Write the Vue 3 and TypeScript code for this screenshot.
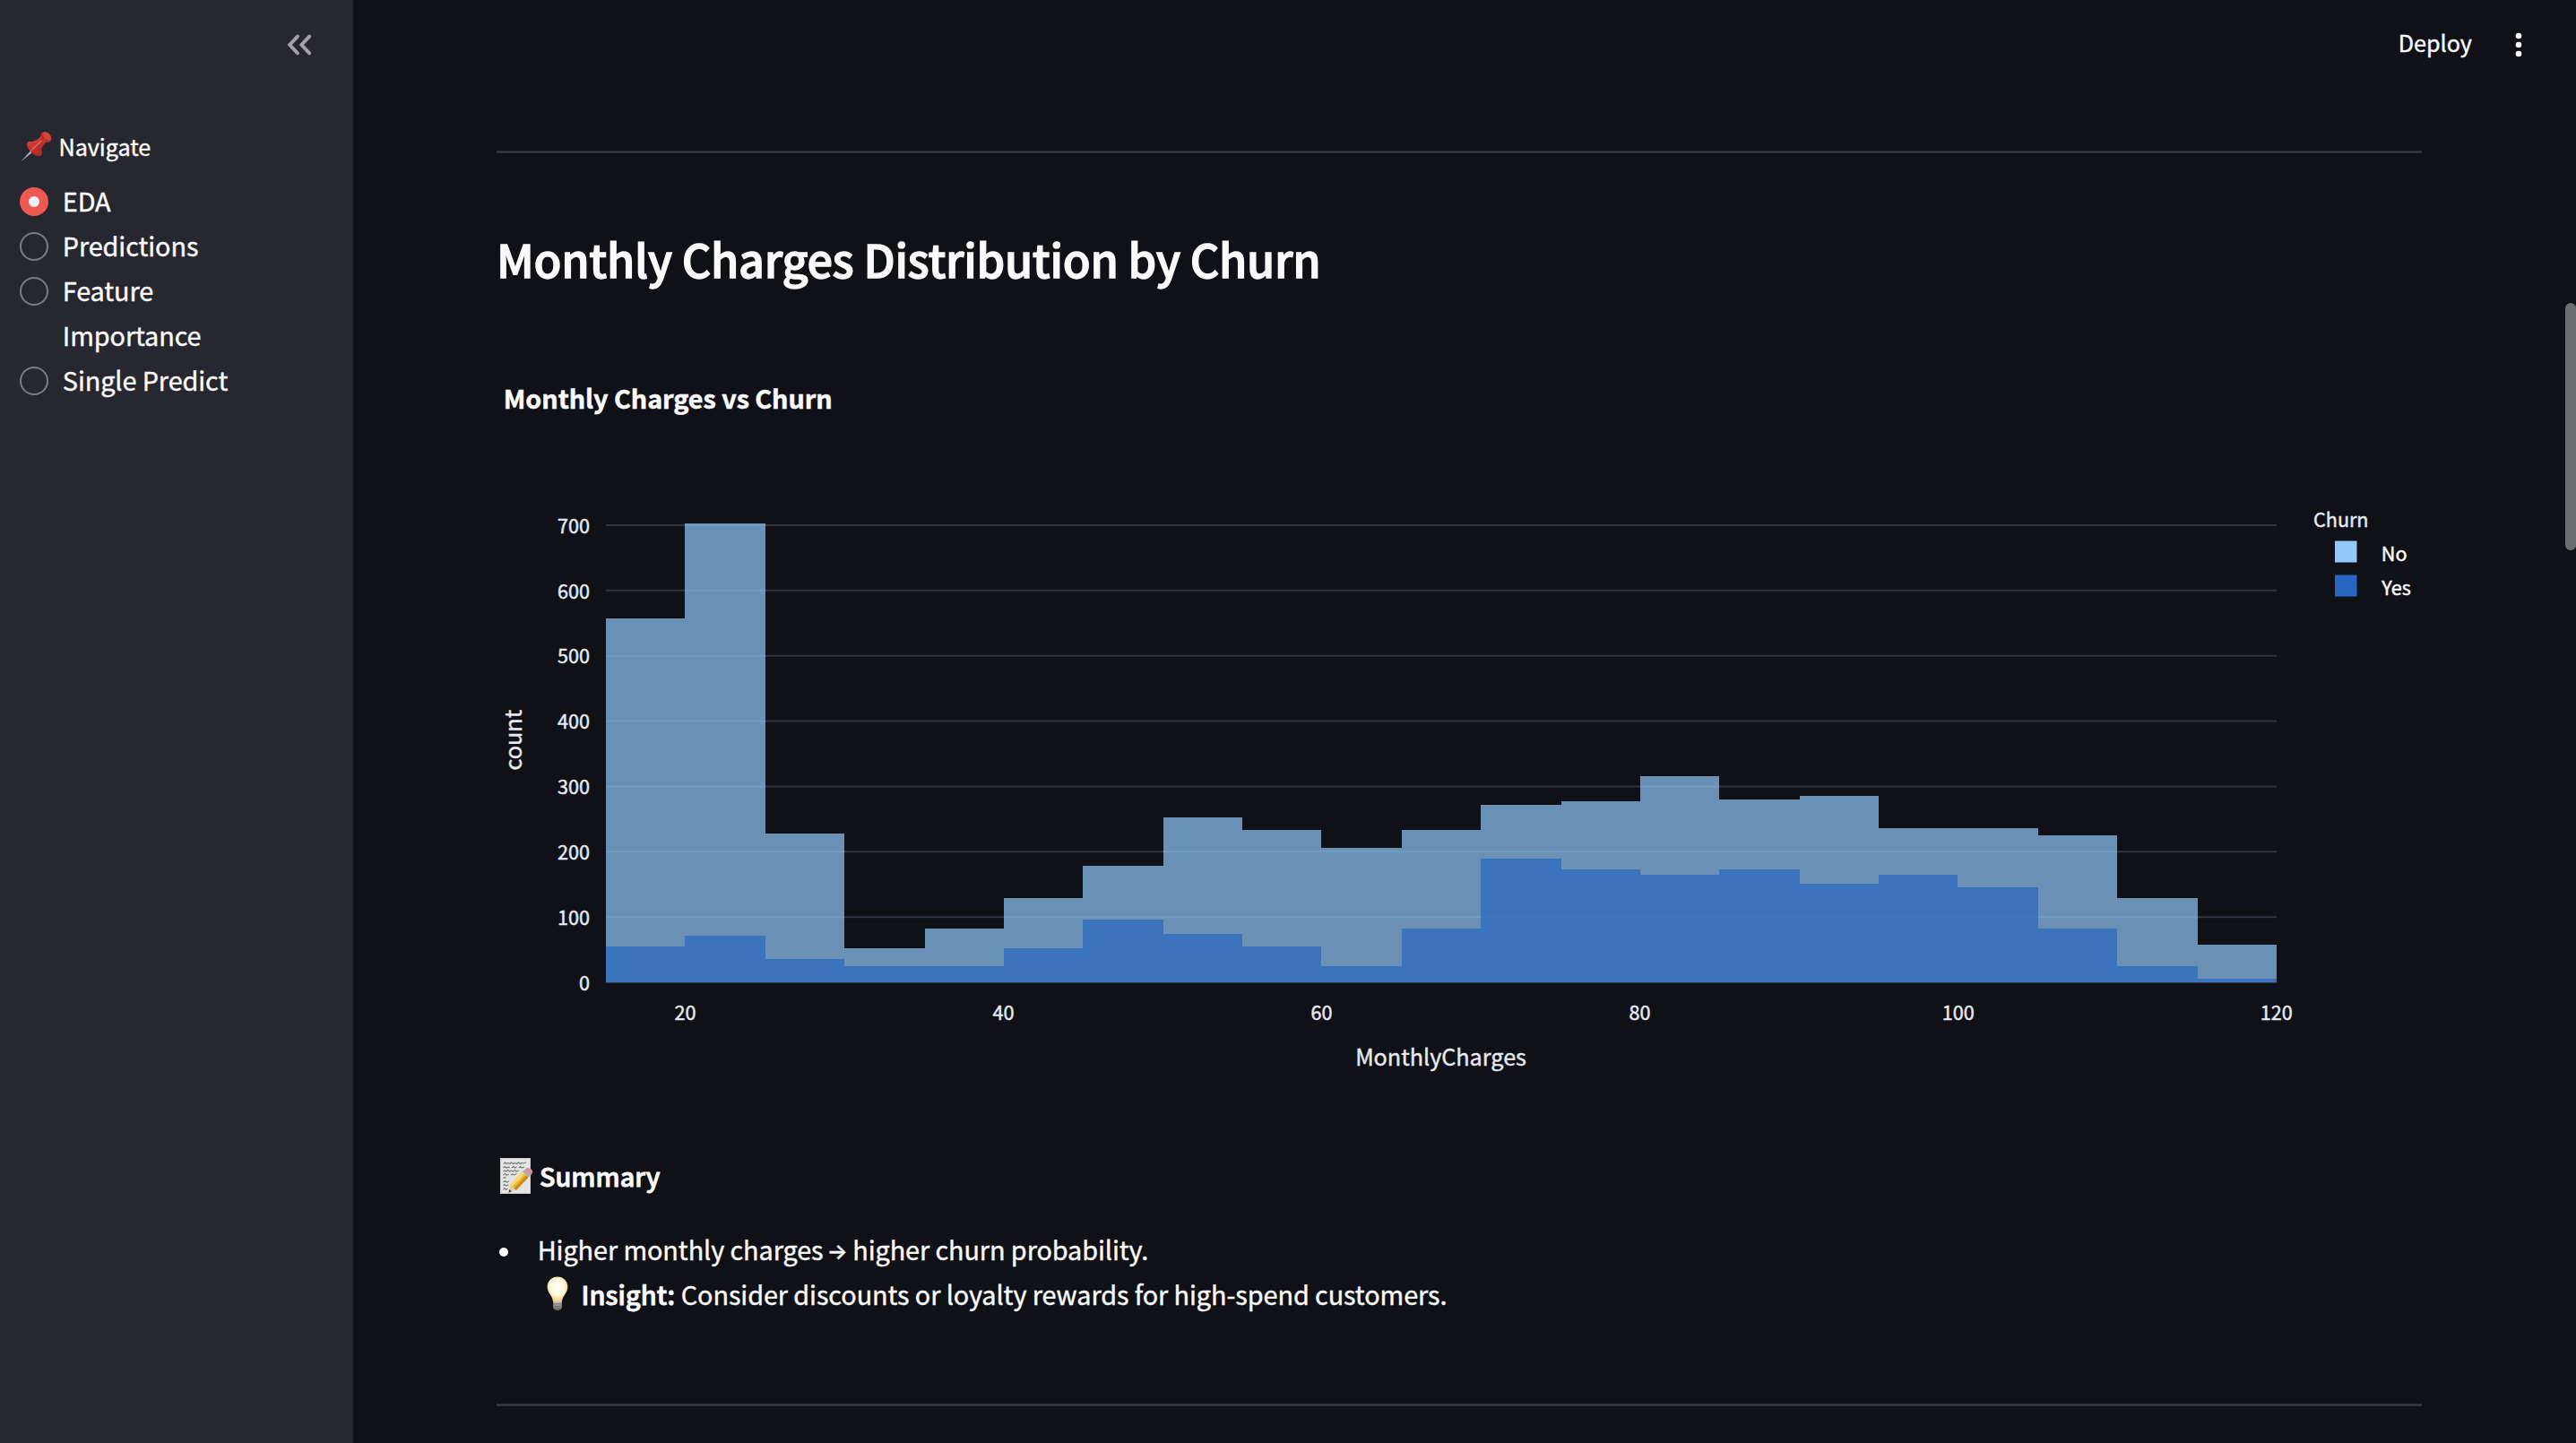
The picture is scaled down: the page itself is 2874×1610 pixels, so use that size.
<script setup lang="ts">
interface NavItem {
  label: string
  active: boolean
}

const navItems: NavItem[] = [
  { label: 'EDA', active: true },
  { label: 'Predictions', active: false },
  { label: 'Feature Importance', active: false },
  { label: 'Single Predict', active: false },
]

// Plot frame, in SVG user units
const plot = { left: 676, right: 2540, base: 1096, unit: 510 / 700 }
const binStart = 15
const binSize = 5

const noTops = [690, 584, 930, 1058, 1036, 1002, 966, 912, 926, 946, 926, 898, 894, 866, 892, 888, 924, 924, 932, 1002, 1054]
const yesTops = [1056, 1044, 1070, 1078, 1078, 1058, 1026, 1042, 1056, 1078, 1036, 958, 970, 976, 970, 986, 976, 990, 1036, 1078, 1092]

const binWidth = (plot.right - plot.left) / noTops.length
const edge = (i: number): number => 2 * Math.round((plot.left + i * binWidth) / 2)

// Outline of one histogram as a single stepped area
function area(tops: number[]): string {
  const steps = tops.map((top, i) => `L${edge(i)} ${top}H${edge(i + 1)}`).join('')
  return `M${plot.left} ${plot.base}${steps}V${plot.base}Z`
}

const noArea = area(noTops)
const yesArea = area(yesTops)

const yTicks = [0, 100, 200, 300, 400, 500, 600, 700].map((value) => ({
  value,
  y: plot.base - value * plot.unit,
}))
const xTicks = [20, 40, 60, 80, 100, 120].map((value) => ({
  value,
  x: plot.left + ((value - binStart) / binSize) * binWidth,
}))
</script>

<template>
  <div class="page">
    <aside class="sidebar">
      <div class="sidebar-head">
        <svg class="collapse" width="30" height="26" viewBox="0 0 30 26">
          <path d="M13 3.6 4.2 13l8.8 9.4M26.2 3.6 17.4 13l8.8 9.4" />
        </svg>
      </div>
      <div class="nav-title">
        <svg width="36" height="36" viewBox="0 0 36 36">
          <defs>
            <linearGradient id="pinRed" x1="0" y1="0" x2="1" y2="1">
              <stop offset="0" stop-color="#d94c43" />
              <stop offset="0.5" stop-color="#c6332d" />
              <stop offset="1" stop-color="#98221e" />
            </linearGradient>
          </defs>
          <path d="M1.2 34.6 14.5 19.6l2.4 2.2Z" fill="#9fb4c6" />
          <ellipse cx="16.4" cy="20" rx="10.6" ry="5.4" transform="rotate(44 16.4 20)" fill="url(#pinRed)" />
          <path d="M10.5 12.2C16 12.6 20.5 9.5 24.6 4.5L31.5 11C26.5 15 23.5 19.5 23.8 25.5Z" fill="url(#pinRed)" />
          <path d="M12 22.8 24 11" stroke="#e58a86" stroke-width="1.3" opacity="0.7" />
          <ellipse cx="29.6" cy="6.8" rx="6.8" ry="4.8" transform="rotate(44 29.6 6.8)" fill="#b92f29" />
          <ellipse cx="30.5" cy="5.8" rx="5.4" ry="3.3" transform="rotate(44 30.5 5.8)" fill="#d6433a" />
        </svg>
        <span>Navigate</span>
      </div>
      <ul class="nav">
        <li v-for="item in navItems" :key="item.label" class="nav-item">
          <span class="radio" :class="{ on: item.active }"></span>
          <span class="nav-label">{{ item.label }}</span>
        </li>
      </ul>
    </aside>

    <main class="main">
      <header class="topbar">
        <span>Deploy</span>
        <svg class="menu" width="40" height="40" viewBox="0 0 24 24">
          <circle cx="12" cy="6" r="2" />
          <circle cx="12" cy="12" r="2" />
          <circle cx="12" cy="18" r="2" />
        </svg>
      </header>

      <div class="content">
        <div class="rule"></div>
        <h3 class="title">Monthly Charges Distribution by Churn</h3>

        <svg class="chart" width="2148" height="840" viewBox="554 400 2148 840">
          <text class="chart-title" x="561.8" y="456">Monthly Charges vs Churn</text>
          <line v-for="t in yTicks" :key="t.value" class="grid" x1="676" x2="2540" :y1="t.y" :y2="t.y" />
          <path class="area-no" :d="noArea" />
          <path class="area-yes" :d="yesArea" />
          <text v-for="t in yTicks" :key="t.value" class="tick" x="658" :y="t.y + 8.7" text-anchor="end">{{ t.value }}</text>
          <text v-for="t in xTicks" :key="t.value" class="tick" :x="t.x - 0.3" y="1137.5" text-anchor="middle">{{ t.value }}</text>
          <text class="axis" x="1607.5" y="1188.7" text-anchor="middle">MonthlyCharges</text>
          <text class="axis" transform="translate(582.3 825.7) rotate(-90)" text-anchor="middle">count</text>
          <text class="tick" x="2581" y="588">Churn</text>
          <rect class="key-no" x="2605" y="603.5" width="24.5" height="24" />
          <rect class="key-yes" x="2605" y="641.5" width="24.5" height="24" />
          <text class="tick key-label" x="2656.8" y="626">No</text>
          <text class="tick key-label" x="2657.3" y="664">Yes</text>
        </svg>

        <div class="summary">
          <svg width="38" height="42" viewBox="0 0 38 42">
            <rect x="1" y="1" width="34" height="40" fill="#e4e4e2" />
            <rect x="1.5" y="1.5" width="33" height="39" fill="none" stroke="#cfcfcd" />
            <g fill="none" stroke="#77787a" stroke-width="1.1">
              <path d="M5 7.5l1.5-1.5 1.5 1.5 2-1 2 1 1.5-1.5 2 1.5 2-1 2 1 2-1.5 1.5 1.5 2-1 2 .5 3-1" />
              <path d="M4.5 12l1.5-1.5 2 1.5 2-1 1.5 1M14 12l2-1.5 1.5 1.5 2-1M22 12l1.5-1.5 1.5 1.5 3-1" />
              <path d="M4.5 16l1.5-1 1.5 1 2-1.5 2 1.5 2-1 2 1 2-1.5 1.5 1.5 3-1" />
              <path d="M4.5 20l2-1.5 1.5 1.5 3-1M13 20l1.5-1 2 1 3-1.5" />
              <path d="M4.5 23.5l1.5-1 1.5 1" />
              <path d="M4.5 28l2-1.5 1.5 1.5 3-1" />
              <path d="M4.5 32l1.5-1.5 1.5 1.5 3-1" />
              <path d="M4.5 36.5l1.5-2 1.5 2 2-1.5" />
            </g>
            <path d="M10.5 39.5 12.8 30.8 18.5 36.3Z" fill="#ead0a0" />
            <path d="M10.5 39.5 11.4 36 13.8 38.4Z" fill="#3a3835" />
            <path d="M12.2 30.4 26 16.300 32.500 22.700 18.800 36.900Z" fill="#f0b93a" />
            <path d="M12.2 30.4 26 16.300 28.300 18.600 14.700 32.600Z" fill="#f9da73" />
            <path d="M16.600 34.500 30.200 20.400 32.500 22.700 18.800 36.900Z" fill="#c98a1e" />
            <path d="M26 16.300 28.800 13.500 35.300 19.900 32.500 22.700Z" fill="#a9adb3" />
            <path d="M28.800 13.500C31 11.500 33.500 11.500 35.700 13.500S37.400 17.800 35.300 19.900Z" fill="#e58a8f" />
          </svg>
          <span>Summary</span>
        </div>

        <div class="note">
          <span class="bullet"></span>
          <div class="note-body">
            <div class="line">Higher monthly charges <span class="arrow">→</span> higher churn probability.</div>
            <div class="line">
              <svg class="bulb" width="24" height="40" viewBox="0 0 24 40">
                <defs>
                  <radialGradient id="glow" cx="0.5" cy="0.42" r="0.6">
                    <stop offset="0" stop-color="#fffffa" />
                    <stop offset="0.55" stop-color="#fdf8dc" />
                    <stop offset="1" stop-color="#e9cf7c" />
                  </radialGradient>
                  <linearGradient id="cap" x1="0" y1="0" x2="0" y2="1">
                    <stop offset="0" stop-color="#c9c7c0" />
                    <stop offset="1" stop-color="#5c5b58" />
                  </linearGradient>
                </defs>
                <path d="M12 .6C5.5 .6 .6 5.5 .6 11.8c0 6.6 5.4 9 6.4 16.2h10c1-7.2 6.4-9.6 6.4-16.2C23.4 5.5 18.5 .6 12 .6Z" fill="url(#glow)" />
                <path d="M7.2 28h9.6v7.2c0 1-1.5 1.6-2.3 2.2-.8 1.2-4.2 1.2-5 0-.8-.6-2.3-1.2-2.3-2.2Z" fill="url(#cap)" />
                <path d="M7.2 30.8h9.6M7.2 33.6h9.6" stroke="#77756f" stroke-width="0.9" />
              </svg>
              <strong>Insight:</strong> Consider discounts or loyalty rewards for high-spend customers.
            </div>
          </div>
        </div>
        <div class="rule last"></div>
      </div>
    </main>
    <div class="scrollbar"></div>
  </div>
</template>

<style>
body {
  margin: 0;
  background: #0f1116;
}
</style>

<style scoped>
.page {
  position: relative;
  display: flex;
  width: 2874px;
  height: 1610px;
  overflow: hidden;
  background: #0f1116;
  color: #fafafa;
  font-family: "Noto Sans CJK JP", "Noto Sans", sans-serif;
  font-size: 28.8px;
  line-height: 50px;
  -webkit-text-stroke: 0.4px currentColor;
}

.sidebar {
  box-sizing: border-box;
  width: 394px;
  flex: none;
  padding: 0 22px;
  background: #26272f;
}

.sidebar-head {
  display: flex;
  justify-content: flex-end;
  height: 109px;
  padding: 37px 23px 0 0;
  box-sizing: border-box;
}

.collapse {
  fill: none;
  stroke: #a3a3a6;
  stroke-width: 3.9;
  stroke-linecap: round;
  stroke-linejoin: miter;
}

.nav-title {
  display: flex;
  gap: 7.5px;
  height: 34px;
  margin-top: 37px;
  font-size: 25.2px;
  line-height: 34px;
  letter-spacing: -0.05px;
}

.nav {
  width: 240px;
  margin: 19px 0 0;
  padding: 0;
  list-style: none;
}

.nav-item {
  display: flex;
  gap: 15.8px;
}

.nav-label {
  width: 190px;
  letter-spacing: -0.08px;
}

.radio {
  box-sizing: border-box;
  flex: none;
  width: 32px;
  height: 32px;
  margin-top: 10px;
  border: 2px solid #7c7d82;
  border-radius: 50%;
}

.radio.on {
  border: 10px solid #ee5a52;
  background: #f0f1f6;
}

.main {
  flex: 1;
}

.topbar {
  display: flex;
  justify-content: flex-end;
  box-sizing: border-box;
  height: 94px;
  padding-right: 44px;
  font-size: 25.2px;
  line-height: 94px;
}

.menu {
  margin: 30px 0 0 32px;
  fill: #fafafa;
}

.content {
  width: 2148px;
  margin-left: 160px;
  padding-top: 74px;
}

.rule {
  height: 1px;
  background: #3f4044;
  border-top: 1px solid #2a2b2f;
  border-bottom: 1px solid #2a2b2f;
}

.rule.last {
  margin-top: 97px;
}

.title {
  margin: 84px 0 77px;
  font-size: 50.4px;
  font-weight: 500;
  line-height: 68px;
  letter-spacing: -0.31px;
  -webkit-text-stroke: 1.3px #fafafa;
}

.chart {
  display: block;
}

.chart-title {
  fill: #fafafa;
  stroke: #fafafa;
  stroke-width: 0.5px;
  font-size: 28.8px;
  font-weight: 700;
  letter-spacing: -0.07px;
}

.grid {
  stroke: #31333f;
  stroke-width: 2;
}

.area-no {
  fill: #92c8fa;
  opacity: 0.7;
}

.area-yes {
  fill: #2966c1;
  opacity: 0.7;
}

.key-no {
  fill: #92c8fa;
}

.key-yes {
  fill: #2966c1;
}

.tick {
  fill: #e6eaf1;
  stroke: #e6eaf1;
  stroke-width: 0.45px;
  font-size: 21.6px;
}

.key-label {
  fill: #fafafa;
  stroke: #fafafa;
}

.axis {
  fill: #e6eaf1;
  stroke: #e6eaf1;
  stroke-width: 0.4px;
  font-size: 25.2px;
}

.summary {
  display: flex;
  gap: 7px;
  height: 50px;
  margin-top: 47px;
  padding-left: 3px;
  font-weight: 500;
  -webkit-text-stroke: 0.9px #fafafa;
}

.summary svg {
  margin-top: 4px;
}

.note {
  display: flex;
  margin-top: 32px;
  letter-spacing: -0.07px;
}

.bullet {
  width: 10px;
  height: 10px;
  margin: 23px 32.7px 0 3px;
  border-radius: 50%;
  background: #fafafa;
}

.line {
  height: 50px;
  white-space: nowrap;
}

.arrow {
  display: inline-block;
  width: 20px;
  font-family: Inter, sans-serif;
  font-size: 24px;
  font-weight: 500;
  line-height: 38px;
  text-align: center;
  text-indent: -2px;
  vertical-align: 1px;
}

.bulb {
  float: left;
  margin: 5px 14.5px 0 10.2px;
}

.line strong {
  font-weight: 500;
  letter-spacing: 0.14px;
  -webkit-text-stroke: 0.9px #fafafa;
}

.scrollbar {
  position: absolute;
  top: 338px;
  right: 0;
  width: 12px;
  height: 276px;
  border-radius: 6px;
  background: #6c6d70;
}
</style>
